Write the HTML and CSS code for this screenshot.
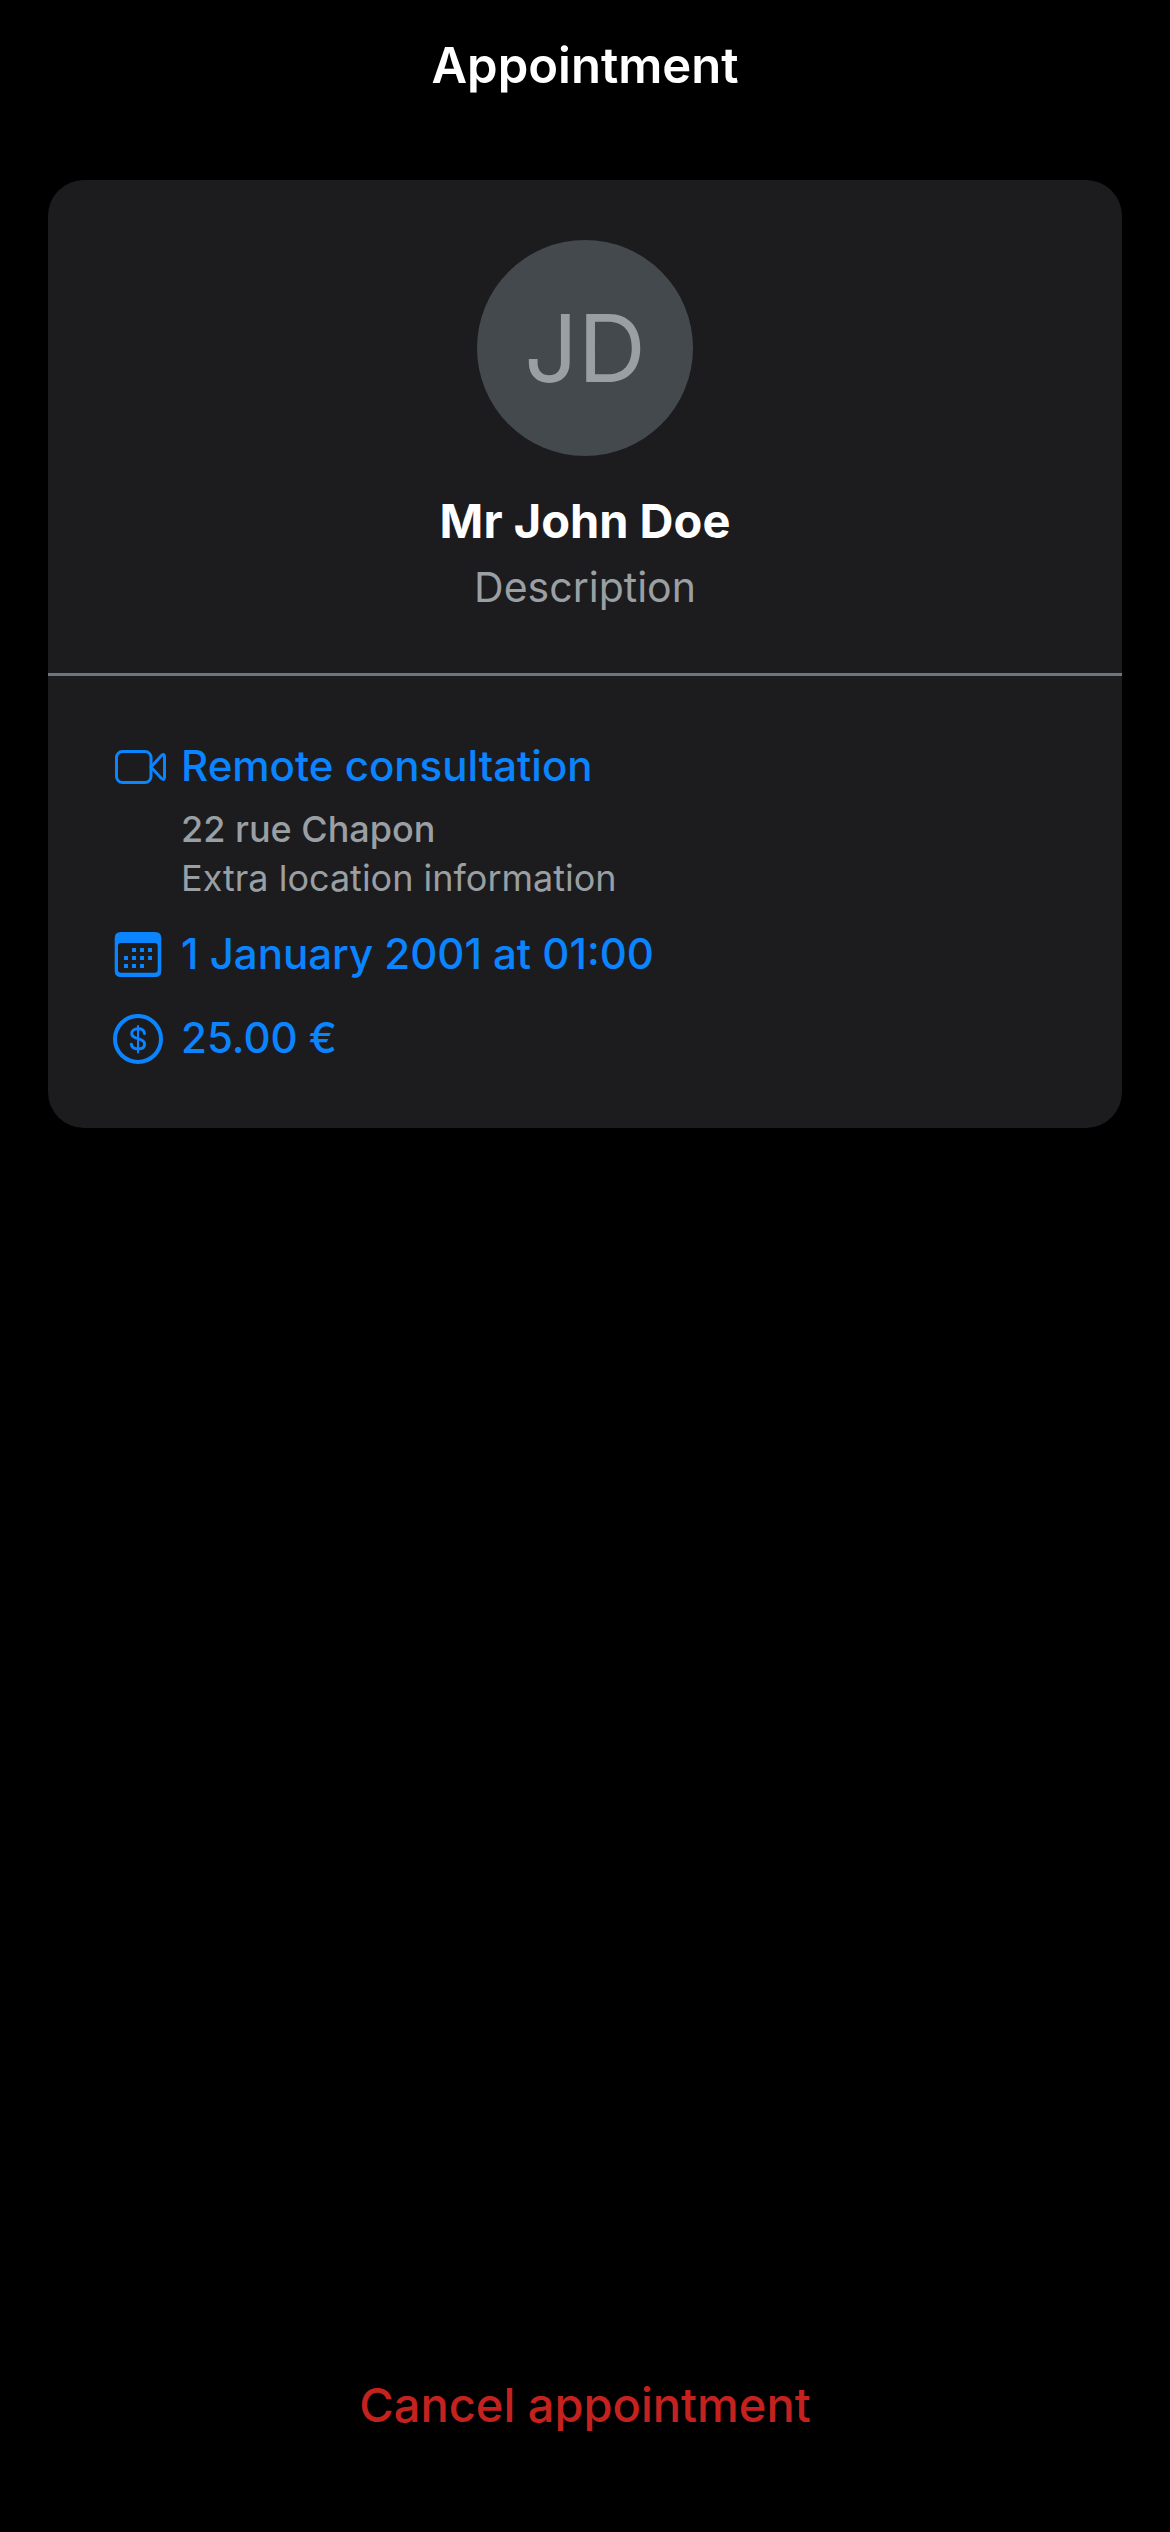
FILE: index.html
```html
<!DOCTYPE html>
<html lang="en">
<head>
<meta charset="utf-8">
<meta name="viewport" content="width=device-width, initial-scale=1">
<title>Appointment</title>
<link rel="stylesheet" href="styles.css">
</head>
<body>
<header class="nav-bar">
  <h1 class="nav-title">Appointment</h1>
</header>
<main class="content">
  <article class="card">
    <section class="profile">
      <div class="avatar">JD</div>
      <h2 class="name">Mr John Doe</h2>
      <p class="description">Description</p>
    </section>
    <section class="details">
      <div class="row">
        <svg class="icon" viewBox="0 0 52 52" fill="none" stroke="currentColor" stroke-width="3" stroke-linejoin="round" aria-hidden="true">
          <rect x="4.5" y="11.5" width="34.5" height="31" rx="6"/>
          <path d="M39 27 49.5 15.6Q52.5 13 52.5 17V37Q52.5 41 49.5 38.4Z"/>
        </svg>
        <span>Remote consultation</span>
      </div>
      <address class="location">
        <span class="street">22 rue Chapon</span>
        <span>Extra location information</span>
      </address>
      <div class="row">
        <svg class="icon" viewBox="0 0 52 52" fill="currentColor" aria-hidden="true">
          <path fill-rule="evenodd" d="M9 4H43Q49.300 4 49.300 10V43Q49.300 49 43 49H9Q2.700 49 2.700 43V10Q2.700 4 9 4ZM9 15Q6 15 6 18V41.700Q6 44.700 9 44.700H42.700Q45.700 44.700 45.700 41.700V18Q45.700 15 42.700 15Z"/>
          <path d="M20 20h4v4h-4zM28 20h4v4h-4zM36 20h4v4h-4zM12 28h4v4h-4zM20 28h4v4h-4zM28 28h4v4h-4zM36 28h4v4h-4zM12 36h4v4h-4zM20 36h4v4h-4zM28 36h4v4h-4z"/>
        </svg>
        <time datetime="2001-01-01T01:00">1 January 2001 at 01:00</time>
      </div>
      <div class="row row-price">
        <svg class="icon" viewBox="0 0 52 52" fill="none" stroke="currentColor" stroke-linecap="round" aria-hidden="true">
          <circle cx="26" cy="27" r="23" stroke-width="4"/>
          <path stroke-width="2" d="M26 14V40.500"/>
          <path stroke-width="3" d="M32.500 21.500C32 18.300 29.500 16.800 26 16.800C22.300 16.800 19.700 18.700 19.700 21.500C19.700 24.500 22.300 25.700 26 26.600C30 27.600 32.600 28.900 32.600 32C32.600 35.300 29.800 37 26 37C22.300 37 19.600 35.200 19.300 32.200"/>
        </svg>
        <span>25.00 €</span>
      </div>
    </section>
  </article>
</main>
<footer class="actions">
  <button class="cancel" type="button">Cancel appointment</button>
</footer>
</body>
</html>
```
FILE: styles.css
```css
* {
  box-sizing: border-box;
  margin: 0;
}

body {
  display: flex;
  flex-direction: column;
  min-height: 100vh;
  background: #000;
  color: #fff;
  font-family: Inter, "Liberation Sans", sans-serif;
}

.nav-bar {
  padding: 36px 48px;
  text-align: center;
}

.nav-title {
  font-size: 49px;
  line-height: 60px;
  font-weight: 600;
}

.content {
  flex: 1;
  padding: 48px;
}

.card {
  border-radius: 36px;
  background: #1c1c1e;
}

.profile {
  display: flex;
  flex-direction: column;
  align-items: center;
  padding: 60px 48px 61px;
  border-bottom: 3px solid #6e767d;
}

.avatar {
  display: flex;
  align-items: center;
  justify-content: center;
  width: 216px;
  height: 216px;
  border-radius: 50%;
  background: #44494d;
  color: #9a9fa3;
  font-size: 94px;
  line-height: 116px;
}

.name {
  margin-top: 35px;
  font-size: 47px;
  line-height: 60px;
  font-weight: 700;
}

.description {
  margin-top: 11px;
  color: #9a9fa3;
  font-size: 41px;
  line-height: 50px;
}

.details {
  padding: 64px;
}

.row {
  display: flex;
  align-items: center;
  gap: 17px;
  color: #0a84ff;
  font-size: 42px;
  line-height: 52px;
  font-weight: 500;
}

.row-price {
  margin-top: 32px;
}

.icon {
  flex: none;
  width: 52px;
  height: 52px;
  overflow: visible;
}

.location {
  display: flex;
  flex-direction: column;
  margin: 13px 0 25px;
  padding-left: 69px;
  color: #9a9fa3;
  font-size: 36px;
  line-height: 49px;
  font-style: normal;
}

.street {
  font-weight: 500;
}

.actions {
  display: flex;
  justify-content: center;
  padding: 0 48px 97px;
}

.cancel {
  padding: 0;
  border: 0;
  background: none;
  color: #c5221f;
  font-family: inherit;
  font-size: 47px;
  line-height: 60px;
  font-weight: 500;
  cursor: pointer;
}
```
